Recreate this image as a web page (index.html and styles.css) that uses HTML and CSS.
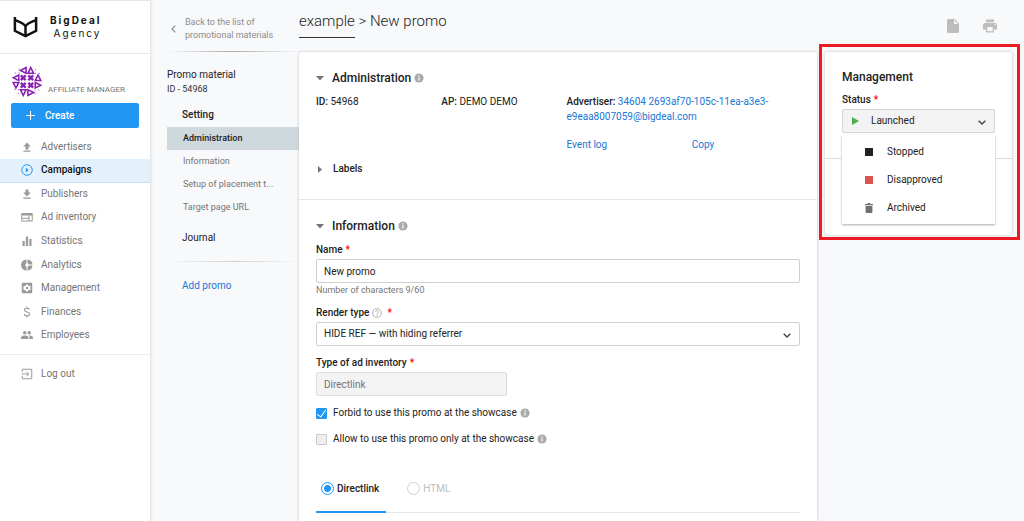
FILE: index.html
```
<!DOCTYPE html>
<html lang="en">
<head>
<meta charset="utf-8">
<meta name="viewport" content="width=device-width, initial-scale=1">
<title>example &gt; New promo</title>
<link rel="stylesheet" href="styles.css">
</head>
<body>
<svg class="defs" aria-hidden="true">
  <symbol id="i-info" viewBox="0 0 24 24"><circle cx="12" cy="12" r="11" fill="currentColor"/><path d="M10.600 5.500h2.800v2.800h-2.800zM10.600 10h2.800v8h-2.800z" fill="#fff"/></symbol>
  <symbol id="i-down" viewBox="0 0 8 5"><path d="M0 0h8L4 4.500z" fill="currentColor"/></symbol>
  <symbol id="i-chev" viewBox="0 0 8 5"><path d="M.7.7 4 4 7.300.7" fill="none" stroke="currentColor" stroke-width="1.400"/></symbol>
</svg>
<div class="app">
  <aside class="sidebar">
    <a class="brand" href="#">
      <svg class="brand-mark" viewBox="0 0 25 21" aria-hidden="true"><path d="M1.900 0v13.800l10.600 5.400 10.600-5.400V0M1.900 2.800c3 2.200 8.500 2.400 10.600 6.700 2.100-4.300 7.600-4.500 10.600-6.700M12.500 9v10" fill="none" stroke="#111" stroke-width="2.500"/></svg>
      <span class="brand-text"><b>BigDeal</b><span>Agency</span></span>
    </a>
    <div class="user">
      <svg class="avatar" viewBox="-16 -16 32 32" aria-hidden="true">
        <defs>
          <g id="tri"><path d="M-3 3H3L0-3z" fill="none" stroke="#8a22b0" stroke-width="1.700"/></g>
          <g id="quad">
            <path d="M-6.600-6.600-1.400-1.400M-1.400-6.600-6.600-1.400" stroke="#8a22b0" stroke-width="2.500"/>
            <use href="#tri" transform="translate(-4 -11.800) rotate(-90)"/>
            <use href="#tri" transform="translate(-11.800 -4) rotate(-90)"/>
            <path d="M-9.500-9.500h1.500v1.500zM-13.500-9.500h1.500v1.500zM-9.500-13.500h1.500v1.500z" fill="#a552c4"/>
          </g>
        </defs>
        <use href="#quad"/><use href="#quad" transform="rotate(90)"/><use href="#quad" transform="rotate(180)"/><use href="#quad" transform="rotate(270)"/>
      </svg>
      <span>AFFILIATE MANAGER</span>
    </div>
    <button class="create" type="button"><svg viewBox="0 0 10 10" aria-hidden="true"><path d="M5 0v10M0 5h10" stroke="#fff" stroke-width="1.200"/></svg>Create</button>
    <nav class="nav" aria-label="Main">
      <a href="#"><svg viewBox="0 0 24 24"><path d="M5 19h14v2.500H5zM9 17h6v-6h4.500L12 3 4.500 11H9z"/></svg>Advertisers</a>
      <a href="#" class="active" aria-current="page"><svg viewBox="0 0 24 24"><circle cx="12" cy="12" r="10.500" fill="none" stroke="currentColor" stroke-width="2"/><path d="M9.500 7.500v9l6-4.500z"/></svg>Campaigns</a>
      <a href="#"><svg viewBox="0 0 24 24"><path d="M4.500 19h15v2.500h-15zM9 3h6v6h4.500L12 17 4.500 9H9z"/></svg>Publishers</a>
      <a href="#"><svg viewBox="0 0 24 24"><path fill-rule="evenodd" d="M2 4h20a1.500 1.500 0 0 1 1.500 1.500v14A1.500 1.500 0 0 1 22 21H2a1.500 1.500 0 0 1-1.500-1.500v-14A1.500 1.500 0 0 1 2 4zm.5 5v4.500h12.500V9zm0 6.500V19h12.500v-3.500zM17 9v10h4.500V9z"/></svg>Ad inventory</a>
      <a href="#"><svg viewBox="0 0 24 24"><path d="M3 12h4.500v10H3zM9.700 3h4.500v19H9.700zM16.500 8H21v14h-4.500z"/></svg>Statistics</a>
      <a href="#"><svg viewBox="0 0 24 24"><path d="M11 1v7.500A3.700 3.700 0 0 0 11 15.500V23A11 11 0 0 1 11 1zM13 1a11 11 0 0 1 10 10h-7.500A3.700 3.700 0 0 0 13 8.500zM15.500 13H23a11 11 0 0 1-10 10v-7.500a3.700 3.700 0 0 0 2.500-2.500z"/></svg>Analytics</a>
      <a href="#"><svg viewBox="0 0 24 24"><path fill-rule="evenodd" d="M3 1.500h18A1.500 1.500 0 0 1 22.500 3v18a1.500 1.500 0 0 1-1.500 1.500H3A1.500 1.500 0 0 1 1.500 21V3A1.500 1.500 0 0 1 3 1.500zM10.300 5l-.5 2.300-1.600.9L6 7.500 4.300 10.500 6 12l-1.700 1.500L6 16.500l2.200-.7 1.600.9.500 2.300h3.400l.5-2.300 1.600-.9 2.200.7 1.700-3L18 12l1.700-1.500L18 7.500l-2.200.7-1.600-.9-.5-2.300zM12 9.500a2.500 2.500 0 1 1 0 5 2.500 2.500 0 0 1 0-5z"/></svg>Management</a>
      <a href="#"><svg viewBox="0 0 24 24"><path d="M17 7.500c-.5-2-2.200-3-5-3s-5 1.300-5 3.500c0 5.300 10.300 2.500 10.300 8 0 2.200-2.200 3.700-5.300 3.700-3.200 0-5.300-1.500-5.500-3.700M12 1v3.500M12 19.500V23" fill="none" stroke="currentColor" stroke-width="2.200"/></svg>Finances</a>
      <a href="#"><svg viewBox="0 0 24 24"><path d="M16.500 11a3.500 3.500 0 1 0 0-7 3.500 3.500 0 0 0 0 7zM7.500 11a3.500 3.500 0 1 0 0-7 3.500 3.500 0 0 0 0 7zM7.500 13C4.800 13 0 14.300 0 17v3h15v-3c0-2.700-4.800-4-7.500-4zM16.500 13l-1.200.1C16.500 14 17 15.400 17 17v3h7v-3c0-2.700-4.800-4-7.500-4z"/></svg>Employees</a>
    </nav>
    <a class="logout" href="#"><svg viewBox="0 0 24 24" aria-hidden="true"><path d="M2.500 8V2.500h19v19h-19V16M1 12h14M11 7.500l4.500 4.500-4.500 4.500" fill="none" stroke="currentColor" stroke-width="2"/></svg>Log out</a>
  </aside>

  <aside class="subnav">
    <a class="back" href="#"><svg viewBox="0 0 5 8" aria-hidden="true"><path d="M4.300.7 1 4l3.300 3.300" fill="none" stroke="currentColor" stroke-width="1.200"/></svg><span>Back to the list of promotional materials</span></a>
    <div class="promo"><span>Promo material</span><small>ID - 54968</small></div>
    <nav class="sections" aria-label="Promo sections">
      <a class="group" href="#">Setting</a>
      <a class="item current" href="#">Administration</a>
      <a class="item" href="#">Information</a>
      <a class="item" href="#">Setup of placement t...</a>
      <a class="item" href="#">Target page URL</a>
      <a class="group last" href="#">Journal</a>
    </nav>
    <a class="add" href="#">Add promo</a>
  </aside>

  <div class="content">
    <header class="top">
      <h1><a href="#">example</a> &gt; New promo</h1>
      <div class="tools">
        <button type="button" aria-label="Document"><svg class="doc" viewBox="0 0 12 14"><path fill-rule="evenodd" d="M1.500 0h6L12 4.500v8a1.500 1.500 0 0 1-1.500 1.500h-9A1.500 1.500 0 0 1 0 12.500v-11A1.500 1.500 0 0 1 1.500 0zM7 1v4h4z"/></svg></button>
        <button type="button" aria-label="Print"><svg class="print" viewBox="0 0 14 13"><path fill-rule="evenodd" d="M3 0h8v2.700H3zM2 3.400h10a2 2 0 0 1 2 2V10h-3v3H3v-3H0V5.400a2 2 0 0 1 2-2zM4.300 7.500v4.200h5.400V7.500zM12 4.700a.7.700 0 1 0 0 1.400.7.700 0 0 0 0-1.400z"/></svg></button>
      </div>
    </header>
    <div class="columns">
      <main class="card">
        <section class="admin">
          <h2><svg class="tri"><use href="#i-down"/></svg>Administration<svg class="info"><use href="#i-info"/></svg></h2>
          <div class="facts">
            <div><b>ID:</b> 54968</div>
            <div><b>AP:</b> DEMO DEMO</div>
            <div class="wide"><b>Advertiser:</b> <a href="#"><span>34604 2693af70-105c-11ea-a3e3-</span><wbr><span>e9eaa8007059@bigdeal.com</span></a></div>
            <a class="log" href="#">Event log</a>
            <a href="#">Copy</a>
          </div>
          <h3><svg class="tri side" viewBox="0 0 4 7"><path d="M0 0l4 3.500L0 7z" fill="currentColor"/></svg>Labels</h3>
        </section>
        <section class="details">
          <h2><svg class="tri"><use href="#i-down"/></svg>Information<svg class="info"><use href="#i-info"/></svg></h2>
          <label class="caption" for="name">Name <i>*</i></label>
          <input class="box" id="name" type="text" value="New promo">
          <p class="hint">Number of characters 9/60</p>
          <label class="caption" for="render">Render type <svg class="help" viewBox="0 0 24 24"><circle cx="12" cy="12" r="10.500" fill="none" stroke="currentColor" stroke-width="1.800"/><path d="M8.500 9.500a3.500 3.500 0 1 1 5.300 3c-1.200.8-1.800 1.300-1.800 2.700M12 16.800v2.200" fill="none" stroke="currentColor" stroke-width="1.800"/></svg> <i>*</i></label>
          <div class="select-wrap">
            <select class="box" id="render"><option>HIDE REF — with hiding referrer</option></select>
            <svg class="chev"><use href="#i-chev"/></svg>
          </div>
          <label class="caption" for="type">Type of ad inventory <i>*</i></label>
          <input class="box short" id="type" type="text" value="Directlink" disabled>
          <label class="check"><input type="checkbox" checked><span>Forbid to use this promo at the showcase</span><svg class="info"><use href="#i-info"/></svg></label>
          <label class="check"><input type="checkbox"><span>Allow to use this promo only at the showcase</span><svg class="info"><use href="#i-info"/></svg></label>
          <div class="tabs">
            <label><input type="radio" name="kind" checked>Directlink</label>
            <label class="off"><input type="radio" name="kind" disabled>HTML</label>
          </div>
        </section>
      </main>
      <aside class="card manage">
        <div class="status">
          <h2>Management</h2>
          <label class="caption" for="status">Status <i>*</i></label>
          <div class="select-wrap">
            <svg class="play" viewBox="0 0 7 8" aria-hidden="true"><path d="M0 0l7 4-7 4z" fill="#4caf50"/></svg>
            <select class="box" id="status"><option>Launched</option></select>
            <svg class="chev"><use href="#i-chev"/></svg>
            <ul class="menu" role="listbox" aria-label="Status">
              <li role="option"><span class="sq"></span>Stopped</li>
              <li role="option"><span class="sq red"></span>Disapproved</li>
              <li role="option"><svg class="bin" viewBox="0 0 8 10" aria-hidden="true"><path d="M0 1h2.300l.7-1h2l.7 1H8v1.200H0zM.6 3h6.800v6a1 1 0 0 1-1 1H1.600a1 1 0 0 1-1-1z" fill="#707070"/></svg>Archived</li>
            </ul>
          </div>
        </div>
      </aside>
    </div>
  </div>
</div>
</body>
</html>
```
FILE: styles.css
```
* { box-sizing: border-box; }
body {
  margin: 0;
  background: #f8f9fb;
  color: #222;
  font: 10px/14px Roboto, sans-serif;
}
a { color: #1976d2; text-decoration: none; }
h1, h2, h3, p, ul { margin: 0; padding: 0; }
h1, h2, h3, b { font-weight: 500; }
button, input, select { font: inherit; color: inherit; margin: 0; }
svg { flex: none; }
.defs { position: absolute; width: 0; height: 0; }
.app { display: flex; min-height: 100vh; }

.sidebar {
  flex: none;
  width: 151px;
  background: #fff;
  border-top: 1px solid #e4e6e8;
  border-right: 1px solid #e4e6e8;
  box-shadow: 1px 0 2px #e9ebed;
}
.brand {
  display: flex;
  align-items: center;
  gap: 12px;
  height: 53px;
  padding-left: 13px;
  border-bottom: 1px solid #e6eaee;
  color: #111;
}
.brand-mark { width: 25px; height: 21px; }
.brand-text {
  display: flex;
  flex-direction: column;
  align-items: flex-end;
  font: 10px/13px Inter, sans-serif;
  letter-spacing: 2px;
}
.brand-text b { font-weight: 700; }
.user {
  display: flex;
  align-items: flex-end;
  gap: 6px;
  padding: 12px 0 6px 12px;
  color: #757575;
  font-size: 8px;
}
.avatar { width: 30px; height: 31px; }
.create {
  display: flex;
  align-items: center;
  gap: 10px;
  width: calc(100% - 22px);
  height: 25px;
  margin: 0 11px;
  padding: 0 15px;
  border: 0;
  border-radius: 2px;
  background: #2196f3;
  color: #fff;
  font-weight: 500;
}
.create svg { width: 9px; height: 9px; }
.nav {
  display: grid;
  grid-auto-rows: 1fr;
  height: 212px;
  margin-top: 7px;
}
.nav a, .logout {
  display: flex;
  align-items: center;
  gap: 8px;
  padding-left: 21px;
  color: #757575;
}
.nav svg, .logout svg { width: 12px; height: 12px; fill: #9a9a9a; color: #9a9a9a; }
.nav .active {
  background: #e3f1fd;
  box-shadow: 0 1px #c5e0f6;
  color: #111;
  font-weight: 500;
}
.nav .active svg { color: #2196f3; fill: #2196f3; }
.logout { margin-top: 7px; padding-top: 12px; border-top: 1px solid #e6ecf2; }

.subnav { flex: none; width: 148px; padding: 16px 0 0 16px; }
.back {
  display: flex;
  align-items: center;
  gap: 9px;
  padding: 0 20px 9px 4px;
  border-bottom: 1px solid;
  border-image: linear-gradient(90deg, transparent, #aaa 50%, transparent) 1;
  color: #8c8c8c;
  font-size: 9px;
  line-height: 13px;
}
.back svg { width: 5px; height: 8px; }
.promo { display: flex; flex-direction: column; padding-top: 16px; color: #333; }
.promo span { color: #222; }
.promo small { font-size: 9px; }
.sections {
  display: flex;
  flex-direction: column;
  padding: 7px 0 16px;
  border-bottom: 1px solid;
  border-image: linear-gradient(90deg, transparent, #d0d0d0 50%, transparent) 1;
}
.group { padding: 5px 15px; color: #222; font-weight: 500; }
.group.last { padding: 12px 15px 0; font-weight: 400; }
.item { padding: 5px 0 5px 16px; color: #757575; font-size: 9px; line-height: 13px; }
.current { background: #cfd8dc; color: #222; font-weight: 500; }
.add { display: block; padding: 17px 15px; }

.content { flex: 1; min-width: 0; display: flex; flex-direction: column; }
.top {
  display: flex;
  justify-content: space-between;
  align-items: flex-start;
  height: 52px;
  padding: 11px 27px 0 0;
}
h1 { font-size: 15px; line-height: 20px; font-weight: 300; }
h1 a { display: inline-block; padding-bottom: 6px; border-bottom: 1px solid #333; color: #222; }
.tools { display: flex; gap: 24px; padding-top: 8px; }
.tools button { display: flex; padding: 0; border: 0; background: none; }
.tools svg { fill: #bdbdbd; }
.doc { width: 12px; height: 14px; }
.print { width: 14px; height: 14px; }

.columns { flex: 1; display: flex; gap: 8px; padding-right: 12px; }
.card {
  background: #fff;
  border-radius: 3px;
  box-shadow: 0 0 3px #b8bcc0;
}
main.card { flex: 1; min-width: 0; border-radius: 3px 3px 0 0; }
.admin { padding: 18px 17px 23px; border-bottom: 1px solid #e4e6e8; }
.details { padding: 18px 17px 0; }
h2 { display: flex; align-items: center; font-size: 12px; line-height: 16px; }
h3 { display: flex; align-items: center; font-size: 10px; line-height: 14px; padding-top: 10px; }
.tri { width: 8px; height: 5px; margin-right: 8px; color: #757575; }
.tri.side { width: 4px; height: 7px; margin: 0 11px 0 2px; }
.info { width: 10px; height: 10px; margin-left: 3px; color: #aaa; }
.facts {
  display: grid;
  grid-template-columns: repeat(4, 1fr);
  margin-right: -17px;
  padding-top: 8px;
  line-height: 15px;
}
.wide { grid-column: span 2; padding-right: 17px; }
.log { grid-column: 3; }
.facts > a { padding: 13px 0 0; }

.caption { display: flex; align-items: center; gap: 3px; font-weight: 500; line-height: 14px; }
.caption i { color: #f00; font-style: normal; }
.help { width: 10px; height: 10px; color: #999; margin-right: 2px; }
.box {
  display: block;
  width: 100%;
  height: 24px;
  padding: 0 7px;
  border: 1px solid #d0d0d0;
  border-radius: 2px;
  background: #fff;
  appearance: none;
}
.details h2 + .caption { margin-top: 9px; }
.details .caption + * { margin-top: 2px; }
.hint { color: #757575; font-size: 9px; }
.hint + .caption { margin-top: 9px; }
.select-wrap { position: relative; }
.select-wrap + .caption { margin-top: 10px; }
.chev { position: absolute; right: 9px; top: 11px; width: 8px; height: 5px; color: #444; }
.box.short { width: 191px; background: #f3f3f3; border-color: #ddd; color: #757575; }
.check { display: flex; align-items: center; margin-top: 10px; line-height: 16px; }
.check input {
  appearance: none;
  width: 11px;
  height: 11px;
  margin-right: 6px;
  border: 1px solid #ccc;
  border-radius: 1px;
  background: #eee;
}
.check input:checked { display: grid; place-items: center; border-color: #2196f3; background: #2196f3; }
.check input:checked::after {
  content: "";
  width: 4px;
  height: 8px;
  margin-top: -2px;
  border: solid #fff;
  border-width: 0 1px 1px 0;
  transform: rotate(35deg);
}
.short + .check { margin-top: 9px; }
.tabs { display: flex; margin-top: 26px; border-bottom: 1px solid #e4e6e8; }
.tabs label {
  display: flex;
  align-items: center;
  gap: 3px;
  height: 40px;
  padding: 0 7px 7px 5px;
  margin-bottom: -1px;
  border-bottom: 2px solid #2196f3;
  font-weight: 500;
}
.tabs .off { margin-left: 16px; border-color: transparent; color: #bdbdbd; font-weight: 400; }
.tabs input {
  appearance: none;
  width: 13px;
  height: 13px;
  border: 1px solid #2196f3;
  border-radius: 50%;
  background: radial-gradient(circle, #2196f3 0 3px, #fff 4px);
}
.tabs .off input { border-color: #d0d0d0; background: #fff; }

.manage { position: relative; flex: none; align-self: flex-start; width: 187px; padding-bottom: 76px; }
.manage::after {
  content: "";
  position: absolute;
  inset: -8px -8px -5px -6px;
  border: 3px solid #ed1c24;
}
.status { padding: 17px 17px 25px; border-bottom: 1px solid #ddd; }
.status .caption { margin-top: 8px; padding-bottom: 2px; }
.status .box { padding-left: 28px; background: #f3f3f3; border-color: #d4d4d4; }
.play { position: absolute; left: 10px; top: 8px; width: 7px; height: 8px; }
.menu {
  position: absolute;
  top: 26px;
  left: 0;
  right: 0;
  padding: 3px 0 2px;
  background: #fff;
  box-shadow: 0 1px 2px #aaa;
  list-style: none;
}
.menu li { display: flex; align-items: center; gap: 14px; padding: 7px 23px; line-height: 14px; }
.menu li > :first-child { width: 8px; }
.sq { height: 8px; background: #222; }
.red { background: #d9534f; }
.bin { height: 10px; }
```
